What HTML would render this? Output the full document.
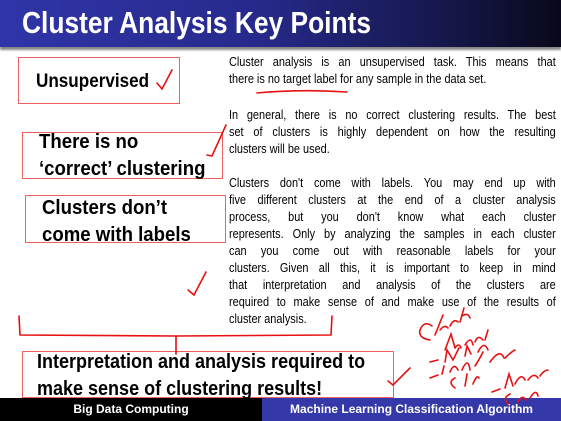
<!DOCTYPE html>
<html><head><meta charset="utf-8"><style>
*{margin:0;padding:0;box-sizing:border-box}
body{width:561px;height:421px;overflow:hidden;background:#fff;position:relative;font-family:"Liberation Sans",sans-serif;color:#000}
.title{position:absolute;left:0;top:0;width:561px;height:47px;background:linear-gradient(90deg,#3035a8 0%,#272a8c 45%,#15174a 80%,#08081a 100%);box-shadow:0 3px 2px #888}
.title span{position:absolute;left:22px;top:5px;color:#fff;font-weight:bold;font-size:31px;white-space:nowrap;transform:scaleX(0.85);transform-origin:left}
.box{position:absolute;border:1.3px solid #f06060;font-weight:bold;font-size:20px;line-height:27px}
.box div{white-space:nowrap;transform-origin:left}
.body{position:absolute;left:229px;width:389px;font-size:13px;line-height:17px;transform:scaleX(0.84);transform-origin:left}
.j{text-align:justify;text-align-last:justify}
.foot{position:absolute;top:398px;height:23px;color:#fff;font-weight:bold;font-size:12px;line-height:23px;text-align:center}
svg{position:absolute;left:0;top:0}
</style></head><body>
<div class="title"><span>Cluster Analysis Key Points</span></div>
<div class="box" style="left:18px;top:57px;width:162px;height:47px;"><div style="position:absolute;left:17px;top:10px;font-size:19px;transform:scaleX(0.9)">Unsupervised</div></div>
<div class="box" style="left:22px;top:132px;width:201px;height:47px;"><div style="position:absolute;left:16px;top:-4px;transform:scaleX(0.93)">There is no<br>‘correct’ clustering</div></div>
<div class="box" style="left:25px;top:195px;width:201px;height:48px;"><div style="position:absolute;left:16px;top:-1px;transform:scaleX(0.93)">Clusters don’t<br>come with labels</div></div>
<div class="box" style="left:22px;top:351px;width:372px;height:47px;"><div style="position:absolute;left:14px;top:-3px;font-size:20px;transform:scaleX(0.9)">Interpretation and analysis required to<br>make sense of clustering results!</div></div>

<div class="body" style="top:53px">
<div class="j">Cluster analysis is an unsupervised task. This means that</div>
<div>there is no target label for any sample in the data set.</div>
</div>
<div class="body" style="top:106px">
<div class="j">In general, there is no correct clustering results. The best</div>
<div class="j">set of clusters is highly dependent on how the resulting</div>
<div>clusters will be used.</div>
</div>
<div class="body" style="top:174px">
<div class="j">Clusters don't come with labels. You may end up with</div>
<div class="j">five different clusters at the end of a cluster analysis</div>
<div class="j">process, but you don't know what each cluster</div>
<div class="j">represents. Only by analyzing the samples in each cluster</div>
<div class="j">can you come out with reasonable labels for your</div>
<div class="j">clusters. Given all this, it is important to keep in mind</div>
<div class="j">that interpretation and analysis of the clusters are</div>
<div class="j">required to make sense of and make use of the results of</div>
<div>cluster analysis.</div>
</div>

<div class="foot" style="left:0;width:262px;background:#000">Big Data Computing</div>
<div class="foot" style="left:262px;width:299px;background:#3538a8">Machine Learning Classification Algorithm</div>

<svg width="561" height="421" fill="none" stroke="#e81010" stroke-width="1.6" stroke-linecap="round">
<path d="M157 83 L162 89 L172 70"/>
<path d="M257 93 Q300 89 347 92"/>
<path d="M207 155 L212 156 L226 125"/>
<path d="M188 290 L194 295 L206 272"/>
<path d="M19 316 L20 335 L176 336 L176 354 M176 336 L331 335 L332 316"/>
<path d="M388 381 L393 385 L410 368"/>
<path d="M430 340 q-12 -2 -10 -10 q4 -10 12 -4 M435 335 l8 -20 M440 330 q5 -6 8 -2 M450 326 q4 -8 8 -4 M460 322 l4 -14 M462 316 q6 -4 8 2"/>
<path d="M445 350 l6 -16 l4 14 M455 348 q4 -6 6 0 M465 345 q6 -10 8 0 M475 342 q3 -8 8 -2 M485 340 l3 -10"/>
<path d="M430 362 l8 -2 M445 362 l2 -12 l6 10 l6 -12 M465 356 l2 -10 l4 8 M478 352 q6 -12 10 -2"/>
<path d="M430 378 l8 -3 M442 374 l2 -8 M450 372 q4 -10 8 -2 M462 370 q6 -14 8 0 M475 366 q4 -6 8 -14 M490 362 q10 -14 14 -4 M505 358 q6 -6 10 -8"/>
<path d="M455 388 q-8 -6 0 -10 M465 386 l2 -12 M473 384 q4 -10 6 -6"/>
<path d="M492 392 l8 -3 M505 388 l4 -14 l4 12 M515 384 q6 -12 10 -4 M528 380 q6 -8 10 -2 M540 376 q4 -6 8 -6"/>
<path d="M508 404 q-6 -6 2 -10 M518 402 q4 -8 8 -2 M530 398 q6 -10 8 -2"/>
</svg>
</body></html>
